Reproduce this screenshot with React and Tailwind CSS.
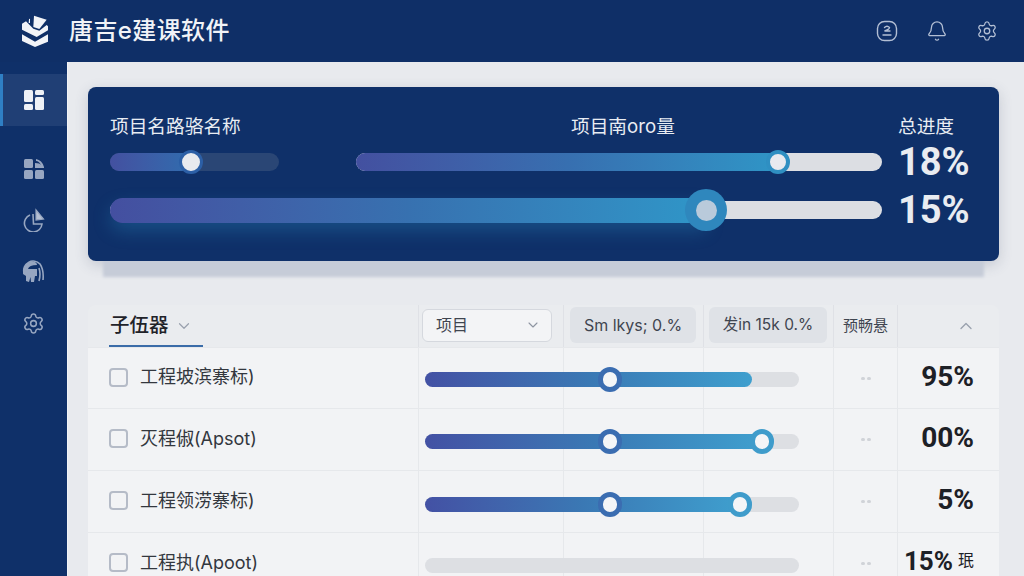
import { Bell, ChevronDown, ChevronUp, Settings } from "lucide-react";

const rows = [
  {
    name: "工程坡滨寨标)",
    fill: 327,
    knobs: [{ x: 185, tone: "border-[#3b6db1]" }],
    value: "95%",
    h: "h-[61px]",
    nudge: "pt-[3px]",
    valueCls: "pb-[3px] text-[28px]",
  },
  {
    name: "灭程俶(Apsot)",
    fill: 337,
    knobs: [
      { x: 185, tone: "border-[#3b6db1]" },
      { x: 337, tone: "border-[#3f9ccb]" },
    ],
    value: "00%",
    h: "h-[62px]",
    nudge: "pt-[4px]",
    valueCls: "pb-[3px] text-[28px]",
  },
  {
    name: "工程领涝寨标)",
    fill: 315,
    knobs: [
      { x: 185, tone: "border-[#3b6db1]" },
      { x: 315, tone: "border-[#3f9ccb]" },
    ],
    value: "5%",
    h: "h-[62px]",
    nudge: "pt-[6px]",
    valueCls: "pb-[3px] text-[28px]",
  },
  {
    name: "工程执(Apoot)",
    fill: 0,
    knobs: [],
    value: "15%",
    extra: "珉",
    h: "h-[62px]",
    nudge: "pt-[4px]",
    valueCls: "pb-[6px] text-[26px]",
  },
];

function Logo() {
  return (
    <svg width="28" height="34" viewBox="33 24 84 100" fill="#f2f4f8">
      <path d="M72 28 L110 40 L88 68 L70 62 Z" />
      <path d="M57 38 L60 37 L60 50 L56 50 Z" />
      <path d="M36 52 L48 45 L70 67 L88 73 L110 56 L114 60 L114 72 L80 92 L36 70 Z" />
      <path d="M36 84 L75 106 L114 84 L114 106 L75 122 L36 104 Z" />
    </svg>
  );
}

function AccountIcon() {
  return (
    <svg width="22" height="22" viewBox="0 0 22 22" fill="none" stroke="#b3bfd4" strokeWidth="1.4" strokeLinecap="round">
      <rect x="1.5" y="1.5" width="19" height="19" rx="7" />
      <path d="M8.5 7.5 q2.5 -2.5 5 0 q0 1.8 -5 3.5 h5.5 M7 15 h8" />
    </svg>
  );
}

function ActiveNavIcon() {
  return (
    <svg width="22" height="22" viewBox="0 0 22 22" fill="#eef1f6">
      <rect x="1" y="1" width="9" height="12" rx="1.5" />
      <rect x="1" y="15" width="9" height="6" rx="1.5" />
      <rect x="12" y="1" width="9" height="5" rx="1.5" />
      <rect x="12" y="8" width="9" height="13" rx="1.5" />
    </svg>
  );
}

function GridIcon() {
  return (
    <svg width="22" height="22" viewBox="0 0 22 22" fill="#97a6c1">
      <rect x="1" y="1" width="9" height="9" rx="1.5" />
      <path d="M13 1 Q19 2 21 9 L21 10 L12 10 L12 5 Q17 5 18 7 Q16 3 13 3 Z" />
      <rect x="1" y="12" width="9" height="9" rx="1.5" />
      <rect x="12" y="12" width="9" height="9" rx="1.5" />
    </svg>
  );
}

function PieIcon() {
  return (
    <svg width="22" height="24" viewBox="0 0 22 24" fill="none" stroke="#97a6c1" strokeWidth="1.6">
      <path d="M7 7 A8.8 8.8 0 1 0 19 16 L10.5 16 L10 6" />
      <path d="M13 2 L20.5 11 L13 12 Z" fill="#b5c0d4" strokeWidth="1.2" />
    </svg>
  );
}

function DomeIcon() {
  return (
    <svg width="23" height="24" viewBox="0 0 23 24" fill="none" stroke="#97a6c1" strokeWidth="1.6">
      <path d="M2 13 A9.5 9.5 0 0 1 18 4 Q22 10 21 20" />
      <path d="M1 14 Q1 2 11 1.5 Q15 2 15 5 Q7 5 6 9 L15 9 L15 16 L13 16 L12 22 L9 22 L8.5 17 L7 22 L4 21 L4 16 Z" fill="#97a6c1" stroke="none" />
      <path d="M17 8 Q19 14 17 21" />
    </svg>
  );
}

function RowSlider({ fill, knobs }) {
  return (
    <div className="relative h-[15px] w-[374px] rounded-full bg-[#dddfe3]">
      {fill > 0 && (
        <div
          className="h-full rounded-full bg-gradient-to-r from-[#4351a4] via-[#3a78b4] to-[#3f9fce]"
          style={{ width: fill }}
        />
      )}
      {knobs.map((k) => (
        <span
          key={k.x}
          className={`absolute top-[-5px] h-[25px] w-[24px] -translate-x-1/2 rounded-full border-[5px] bg-[#f4f5f7] ${k.tone}`}
          style={{ left: k.x }}
        />
      ))}
    </div>
  );
}

export default function App() {
  return (
    <div className="flex h-[576px] w-[1024px] flex-col overflow-hidden bg-[#e8eaee] font-['Inter','Noto_Sans_CJK_SC',sans-serif]">
      <header className="flex h-[62px] shrink-0 items-center justify-between bg-[#0f2f67] pl-[21px] pr-[26px]">
        <div className="flex items-center gap-[20px]">
          <Logo />
          <span className="text-[24px] leading-none font-medium tracking-[0.4px] text-[#f1f3f7]">唐吉e建课软件</span>
        </div>
        <div className="flex items-center gap-[28px]">
          <AccountIcon />
          <Bell size={22} strokeWidth={1.4} className="text-[#b3bfd4]" />
          <Settings size={22} strokeWidth={1.4} className="text-[#b3bfd4]" />
        </div>
      </header>

      <div className="flex min-h-0 flex-1">
        <aside className="flex w-[68px] shrink-0 flex-col items-center border-r border-[#f1f3f6] bg-[#0f3069] pt-[12px]">
          <div className="flex h-[52px] w-full items-center justify-center border-l-[3px] border-[#2f7fc4] bg-[#203f75] pr-[3px]">
            <ActiveNavIcon />
          </div>
          <div className="mt-[32px] flex flex-col items-center gap-[28px]">
            <GridIcon />
            <PieIcon />
            <DomeIcon />
            <Settings size={23} strokeWidth={1.6} className="text-[#97a6c1]" />
          </div>
        </aside>

        <main className="min-w-0 flex-1 px-[20px] pt-[25px]">
          <section className="h-[174px] w-[911px] rounded-[8px] bg-[#0f3069] pl-[22px] pr-[29px] pt-[28px] shadow-[0_31px_3px_-15px_#c6ccd8,0_4px_14px_rgba(60,70,100,0.2)]">
            <div className="flex h-[24px] items-center text-[18.7px] leading-none text-[#e9edf3]">
              <span className="w-[461px]">项目名路骆名称</span>
              <span className="w-[327px]">项目南oro量</span>
              <span>总进度</span>
            </div>

            <div className="mt-[6px] flex h-[34px] items-center">
              <div className="relative h-[18px] w-[169px] shrink-0 rounded-full bg-[#2a4675]">
                <div className="h-full w-[81px] rounded-l-full bg-gradient-to-r from-[#4350a0] to-[#2f6cae]" />
                <span className="absolute left-[69px] top-[-3px] h-[24px] w-[24px] rounded-full border-[3px] border-[#2c5fa6] bg-[#e8eaef]" />
              </div>
              <div className="relative ml-[77px] h-[18px] w-[526px] shrink-0 rounded-full bg-[#dcdee3]">
                <div className="h-full w-[422px] rounded-l-full bg-gradient-to-r from-[#4350a0] via-[#376fb0] to-[#2f95c6]" />
                <span className="absolute left-[410px] top-[-3px] h-[24px] w-[24px] rounded-full border-[4px] border-[#2f8fc2] bg-[#e8eaef]" />
              </div>
              <span className="ml-[16px] font-['Roboto'] text-[38px] leading-none font-bold text-[#e9ecf1]">18%</span>
            </div>

            <div className="mt-[14px] flex h-[34px] items-center">
              <div className="relative flex h-[18px] w-[772px] shrink-0 items-center rounded-full bg-[#dcdee3]">
                <div className="h-[25px] w-[596px] rounded-l-full bg-gradient-to-r from-[#444fa0] via-[#3771b0] to-[#2f96c8] shadow-[0_8px_18px_rgba(47,150,200,0.3)]" />
                <span className="absolute left-[575px] top-[-12px] flex h-[42px] w-[42px] items-center justify-center rounded-full bg-[#2f87bd]">
                  <span className="h-[21px] w-[21px] rounded-full bg-[#b9cadb]" />
                </span>
              </div>
              <span className="ml-[16px] font-['Roboto'] text-[38px] leading-none font-bold text-[#e9ecf1]">15%</span>
            </div>
          </section>

          <section className="mt-[44px] w-[911px]">
            <div className="grid h-[42px] grid-cols-[330px_145px_140px_130px_64px_102px] items-center rounded-t-[8px] bg-[#eaecef] text-[#3f4550]">
              <div className="relative flex h-full items-center gap-[6px] pl-[22px] text-[#1f2329]">
                <span className="text-[19.5px] leading-none font-medium">子伍器</span>
                <ChevronDown size={18} strokeWidth={1.6} className="text-[#9aa1ae]" />
                <span className="absolute bottom-0 left-[21px] h-[2px] w-[94px] bg-[#3a6ca8]" />
              </div>
              <div className="flex h-full items-center border-l border-[#dfe1e6] pb-[2px] pl-[3px] pr-[11px]">
                <div className="flex h-[33px] w-full items-center justify-between rounded-[6px] border border-[#d5d8de] bg-[#f3f4f6] pl-[13px] pr-[10px] text-[16px]">
                  项目
                  <ChevronDown size={16} strokeWidth={1.6} className="text-[#8d94a1]" />
                </div>
              </div>
              <div className="flex h-full items-center border-l border-[#dfe1e6] pb-[2px] pl-[6px] pr-[7px]">
                <div className="flex h-[36px] w-full items-center justify-center rounded-[6px] bg-[#dfe2e7] text-[16px]">
                  Sm lkys; 0.%
                </div>
              </div>
              <div className="flex h-full items-center border-l border-[#dfe1e6] pb-[2px] pl-[5px] pr-[6px]">
                <div className="flex h-[36px] w-full items-center justify-center rounded-[6px] bg-[#dfe2e7] text-[15.5px]">
                  发in 15k 0.%
                </div>
              </div>
              <div className="flex h-full items-center justify-center border-l border-[#dfe1e6] text-[15px]">预畅悬</div>
              <div className="flex h-full items-center justify-center border-l border-[#dfe1e6] pl-[34px]">
                <ChevronUp size={20} strokeWidth={1.6} className="text-[#9aa1ae]" />
              </div>
            </div>

            {rows.map((row) => (
              <div
                key={row.name}
                className={`grid grid-cols-[330px_415px_64px_102px] border-t border-[#e6e8eb] bg-[#f2f3f5] ${row.h}`}
              >
                <div className="flex items-center gap-[12px] pb-[2px] pl-[21px] text-[18px] leading-none text-[#33373e]">
                  <span className="h-[19px] w-[19px] rounded-[4px] border-2 border-[#b5bbc7]" />
                  {row.name}
                </div>
                <div className={`relative flex items-center border-l border-[#e6e8eb] pl-[6px] ${row.nudge}`}>
                  <span className="absolute bottom-0 left-[144px] top-0 w-px bg-[#e6e8eb]" />
                  <span className="absolute bottom-0 left-[284px] top-0 w-px bg-[#e6e8eb]" />
                  <RowSlider fill={row.fill} knobs={row.knobs} />
                </div>
                <div className="flex items-center justify-center gap-[2px] border-l border-[#e6e8eb]">
                  <span className="h-[3px] w-[4px] rounded-full bg-[#d0d3d8]" />
                  <span className="h-[3px] w-[4px] rounded-full bg-[#d0d3d8]" />
                </div>
                <div
                  className={`flex items-center justify-end gap-[5px] border-l border-[#e6e8eb] pr-[25px] font-['Roboto','Noto_Sans_CJK_SC',sans-serif] leading-none font-bold text-[#1d2026] ${row.valueCls}`}
                >
                  {row.value}
                  {row.extra && <span className="text-[16px] font-normal">{row.extra}</span>}
                </div>
              </div>
            ))}
          </section>
        </main>
      </div>
    </div>
  );
}
